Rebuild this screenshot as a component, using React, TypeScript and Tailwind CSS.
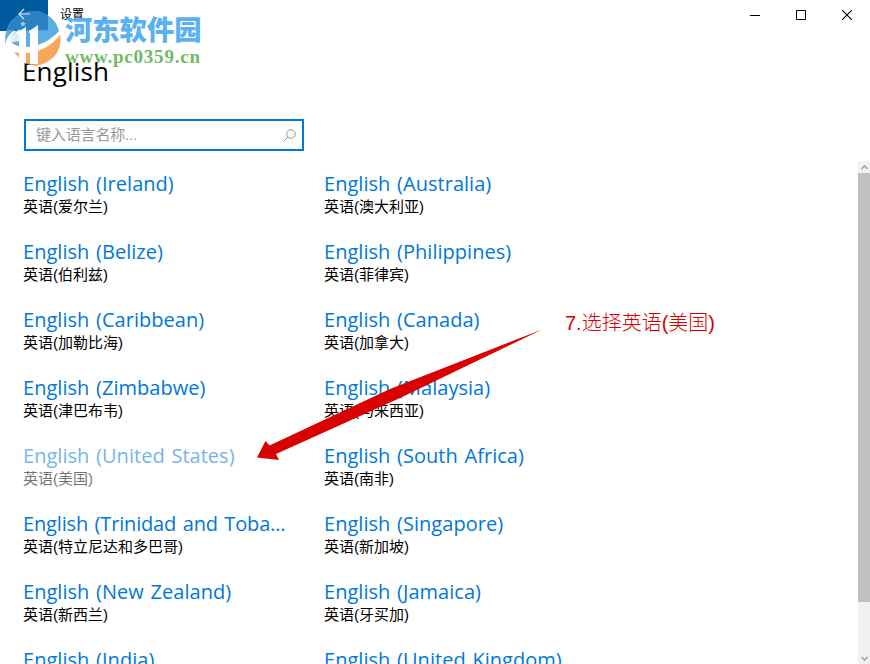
type Lang = { name: string; local: string; dim?: boolean; tight?: boolean };

const left: Lang[] = [
  { name: "English (Ireland)", local: "英语(爱尔兰)" },
  { name: "English (Belize)", local: "英语(伯利兹)" },
  { name: "English (Caribbean)", local: "英语(加勒比海)" },
  { name: "English (Zimbabwe)", local: "英语(津巴布韦)" },
  { name: "English (United States)", local: "英语(美国)", dim: true },
  { name: "English (Trinidad and Toba...", local: "英语(特立尼达和多巴哥)", tight: true },
  { name: "English (New Zealand)", local: "英语(新西兰)" },
  { name: "English (India)", local: "英语(印度)" },
];

const right: Lang[] = [
  { name: "English (Australia)", local: "英语(澳大利亚)" },
  { name: "English (Philippines)", local: "英语(菲律宾)" },
  { name: "English (Canada)", local: "英语(加拿大)" },
  { name: "English (Malaysia)", local: "英语(马来西亚)" },
  { name: "English (South Africa)", local: "英语(南非)" },
  { name: "English (Singapore)", local: "英语(新加坡)" },
  { name: "English (Jamaica)", local: "英语(牙买加)" },
  { name: "English (United Kingdom)", local: "英语(英国)" },
];

function Column({ items }: { items: Lang[] }) {
  return (
    <ul className="w-[301px] shrink-0">
      {items.map((l) => (
        <li key={l.name} className={`h-[68px] whitespace-nowrap ${l.dim ? "opacity-55" : ""}`}>
          <div
            className={`font-['Open_Sans','Noto_Sans',sans-serif] text-[20px] leading-7 text-[#0078d7] [word-spacing:1.5px] ${l.tight ? "tracking-[-0.16px]" : "tracking-[0.03px]"}`}
          >
            {l.name}
          </div>
          <div className="text-[15px] leading-[18px] text-black">{l.local}</div>
        </li>
      ))}
    </ul>
  );
}

function Watermark() {
  return (
    <div className="pointer-events-none absolute left-1 top-2.5 flex">
      <svg width="60" height="60" viewBox="4 10 60 60" className="shrink-0 opacity-95">
        <path d="M6 46C2 27 15 11 33 11c13 0 23 8 26 20-9 10-20 15-33 16-7 0-12-2-15-5-2-3 2-9 9-14C11 31 5 38 6 46Z" fill="#55a9e2" />
        <path d="M7 30C11 19 21 11 33 11c6 0 11 2 15 5v14H19l1-2-3 2Z" fill="#2d84c8" />
        <path d="M13 50c18 3 35-3 47-16 3 14-6 27-20 31-11 3-21-5-27-15Z" fill="#f6a452" />
        <path d="M8 44c15 9 38 3 52-13l1 3C49 49 33 56 13 52c-3-2-4-5-5-8Z" fill="#fff" />
        <path d="M17 34v-2l9-5v37l-7-6V34ZM29 31l9-6v39h-8V33h-1Z" fill="#fff" />
        <path d="M12 36 19 29v12l-10 2c0-3 1-5 3-7Z" fill="#fff" opacity=".8" />
        <path d="m23 21 1 2h2l-1.500 1.500.5 2-2-1-2 1 .5-2L20 23h2Z" fill="#a9cfeb" />
      </svg>
      <div className="pl-px pt-0.5">
        <div className="font-['Noto_Sans_CJK_SC',sans-serif] text-[27.3px] font-black leading-8 text-[#5ab1f1]">河东软件园</div>
        <div className="pt-[3px] font-['Liberation_Serif',serif] text-[19px] font-bold leading-5 tracking-[0.78px] text-[#6fbb64]">www.pc0359.cn</div>
      </div>
    </div>
  );
}

export default function App() {
  return (
    <div className="relative flex h-[664px] w-[870px] flex-col overflow-hidden bg-white font-['Liberation_Sans','Noto_Sans_CJK_SC',sans-serif] text-black">
      <header className="flex h-[30px] shrink-0 items-center">
        <div className="h-[31px] w-12 self-start bg-[#005a9e]" />
        <span className="pl-3 text-[12px]">设置</span>
        <div className="ml-auto flex items-center gap-9 pr-[18px]">
          <svg width="10" height="11"><path d="M0 5.500h10" stroke="#000" /></svg>
          <svg width="10" height="10"><path d="M.5.5h9v9h-9Z" fill="none" stroke="#000" /></svg>
          <svg width="10" height="10"><path d="m0 0 10 10m0-10L0 10" stroke="#000" strokeWidth="1.1" /></svg>
        </div>
      </header>
      <h1 className="pl-[22px] pt-[23px] font-['Open_Sans','Noto_Sans',sans-serif] text-[26px] leading-9 tracking-[0.15px]">English</h1>
      <div className="ml-6 mt-[30px] flex h-8 w-[280px] shrink-0 items-center justify-between border-2 border-[#0078d7] pl-2.5 pr-1.5 text-[15px] text-[#999]">
        <span className="tracking-[-0.15px]">键入语言名称...</span>
        <svg width="13" height="13" viewBox="0 0 13 13" fill="none" stroke="#999">
          <circle cx="8" cy="5" r="4.3" /><path d="m5 8-4.5 4.5" />
        </svg>
      </div>
      <main className="mt-[10px] flex min-h-0 flex-1 overflow-hidden">
        <div className="flex pl-[23px] pt-[9px]">
          <Column items={left} />
          <Column items={right} />
        </div>
        <div className="ml-auto flex w-3 flex-col bg-[#f1f1f1]">
          <div className="flex h-3 shrink-0 items-center justify-center">
            <svg width="7" height="5" fill="none" stroke="#999" strokeWidth="1.3"><path d="M.5 4 3.5 1l3 3" /></svg>
          </div>
          <div className="h-[429px] shrink-0 bg-[#c1c1c1]" />
          <div className="mt-auto flex h-3 shrink-0 items-center justify-center">
            <svg width="7" height="5" fill="none" stroke="#999" strokeWidth="1.3"><path d="m.5 1 3 3 3-3" /></svg>
          </div>
        </div>
      </main>
      <Watermark />
      <svg className="absolute left-[18px] top-[8px]" width="14" height="12" fill="none" stroke="#d3e6f4" strokeWidth="1.1">
        <path d="M12 6H1M6 1 1 6l5 5" />
      </svg>
      <svg className="absolute left-[256px] top-[328px]" width="290" height="134" viewBox="256 328 290 134">
        <path d="M257 457.500 265.500 441l4 4.500L390 389 542 329.500 400 398 276 454l3 6Z" fill="#d90000" />
      </svg>
      <div className="absolute left-[565px] top-[309px] whitespace-nowrap text-[20px] font-light leading-7 text-[#d90000]">7.选择英语(美国)</div>
    </div>
  );
}
